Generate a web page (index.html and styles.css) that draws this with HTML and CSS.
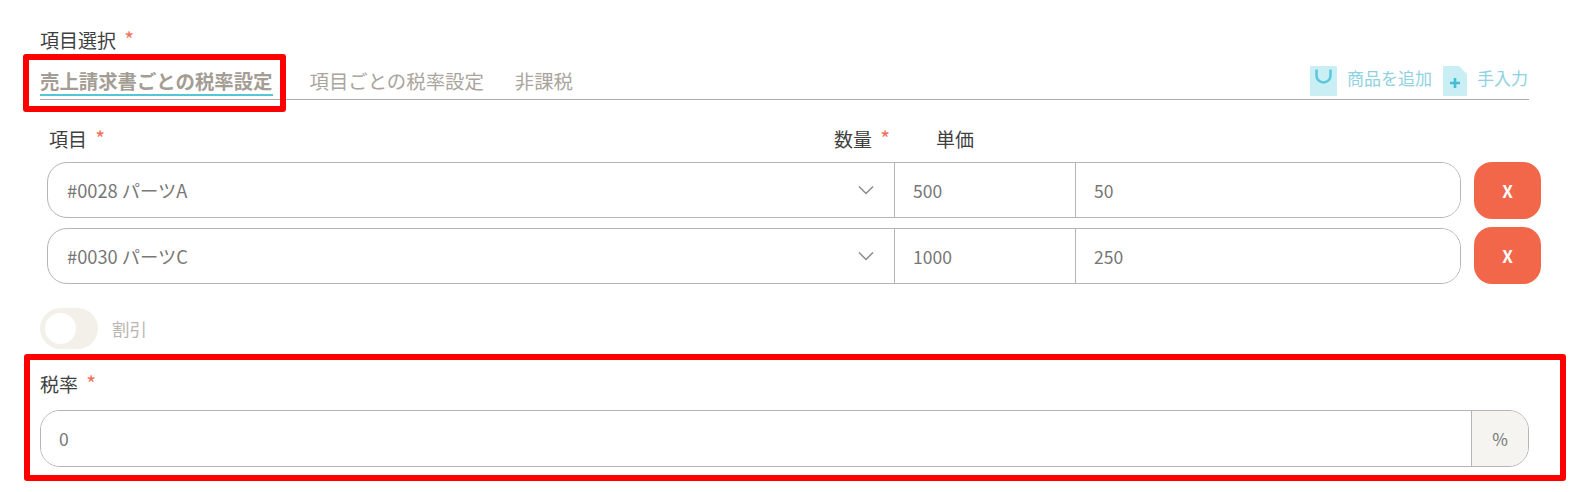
FILE: index.html
```html
<!DOCTYPE html>
<html>
<head>
    <title>項目選択</title>
    <link rel="stylesheet" href="styles.css">
</head>
<body>
    <div class="page">
        <div class="field-label">項目選択 <span class="req">*</span></div>
        <div class="tabs">
            <div class="tab tab-active">
                売上請求書ごとの税率設定
                <div class="mark mark-tab"></div>
            </div>
            <div class="tab">項目ごとの税率設定</div>
            <div class="tab">非課税</div>
            <div class="tools">
                <svg class="tool-icon" width="27" height="30" viewBox="0 0 27 30">
                    <rect width="27" height="30" rx="1" fill="#c9eef4"/>
                    <path d="M6.5 3.5v6a7 7 0 0 0 14 0v-6" fill="none" stroke="#5cc8dc" stroke-width="2.6"/>
                </svg>
                <span class="tool-text">商品を追加</span>
                <svg class="tool-icon tool-icon-doc" width="24" height="30" viewBox="0 0 24 30">
                    <path d="M1 0H16L24 8V29a1 1 0 0 1-1 1H1a1 1 0 0 1-1-1V1a1 1 0 0 1 1-1z" fill="#c9eef4"/>
                    <path d="M12 12v10M7 17h10" fill="none" stroke="#45bdd4" stroke-width="2.6"/>
                </svg>
                <span class="tool-text">手入力</span>
            </div>
        </div>

        <div class="items">
            <div class="items-head">
                <div class="head-name field-label">項目 <span class="req">*</span></div>
                <div class="head-qty field-label">数量 <span class="req">*</span></div>
                <div class="field-label">単価</div>
            </div>
            <div class="item-row">
                <div class="item-group">
                    <div class="item-select">
                        <span>#0028 パーツA</span>
                        <svg width="16" height="10" viewBox="0 0 16 10"><path d="M1 1.5l7 7 7-7" fill="none" stroke="#8f8b84" stroke-width="1.5"/></svg>
                    </div>
                    <input class="item-input item-qty" type="text" value="500">
                    <input class="item-input" type="text" value="50">
                </div>
                <button class="remove-btn">X</button>
            </div>
            <div class="item-row">
                <div class="item-group">
                    <div class="item-select">
                        <span>#0030 パーツC</span>
                        <svg width="16" height="10" viewBox="0 0 16 10"><path d="M1 1.5l7 7 7-7" fill="none" stroke="#8f8b84" stroke-width="1.5"/></svg>
                    </div>
                    <input class="item-input item-qty" type="text" value="1000">
                    <input class="item-input" type="text" value="250">
                </div>
                <button class="remove-btn">X</button>
            </div>
        </div>

        <div class="discount">
            <div class="toggle"><div class="knob"></div></div>
            <span class="discount-text">割引</span>
        </div>

        <div class="tax">
            <div class="mark mark-tax"></div>
            <div class="field-label tax-label">税率 <span class="req">*</span></div>
            <div class="tax-group">
                <input class="tax-input" type="text" value="0">
                <div class="tax-unit">%</div>
            </div>
        </div>
    </div>
</body>
</html>
```

FILE: styles.css
```css
body {
    font-family: "Noto Sans CJK JP", "Noto Sans", sans-serif;
    margin: 0;
    padding: 0;
    background-color: #ffffff;
    color: #444444;
}

.page {
    min-height: 100vh;
    box-sizing: border-box;
    padding: 27px 63px 0 40px;
}

.field-label {
    font-size: 19px;
    line-height: 26px;
    color: #3f3f3f;
}

.req {
    color: #f0705a;
    font-size: 21px;
    line-height: 20px;
    margin-left: 4px;
}

/* tabs */
.tabs {
    display: flex;
    align-items: flex-start;
    gap: 31px;
    padding-bottom: 3px;
    border-bottom: 1px solid #aaaaaa;
}

.tab {
    font-size: 19.4px;
    line-height: 26px;
    margin-top: 15px;
    padding-bottom: 2px;
    color: #aaa59d;
    position: relative;
}

.tab-active {
    font-weight: bold;
    color: #a39d94;
    border-bottom: 2px solid #55c6d8;
    padding-bottom: 0;
    margin-right: 6px;
}

.tools {
    display: flex;
    align-items: center;
    margin-left: auto;
    margin-right: 1px;
    margin-top: 13px;
    height: 30px;
}

.tool-icon {
    margin-right: 10px;
}

.tool-icon-doc {
    margin-left: 11px;
}

.tool-text {
    font-size: 17px;
    line-height: 26px;
    color: #8ed2e2;
    position: relative;
    top: -3px;
}

/* red annotation boxes */
.mark {
    position: absolute;
    border: 6px solid #ff0000;
    border-radius: 3px;
    box-sizing: border-box;
}

.mark-tab {
    top: -14px;
    left: -17px;
    width: 263px;
    height: 58px;
}

.mark-tax {
    top: -19px;
    left: -16px;
    right: -37px;
    bottom: -14px;
}

/* item rows */
.items {
    margin: 26px -12px 0 7px;
}

.items-head {
    display: flex;
    margin-bottom: 10px;
}

.head-name {
    width: 787px;
    padding-left: 2px;
    box-sizing: border-box;
}

.head-qty {
    width: 102px;
}

.item-row {
    display: flex;
    justify-content: space-between;
    height: 57px;
    margin-bottom: 8px;
}

.item-row:last-child {
    margin-bottom: 0;
}

.item-row:last-child .item-group {
    align-self: flex-end;
}

.item-group {
    display: flex;
    width: 1414px;
    height: 56px;
    box-sizing: border-box;
    border: 1px solid #b5b5b5;
    border-radius: 20px;
    overflow: hidden;
}

.item-select {
    display: flex;
    align-items: center;
    justify-content: space-between;
    width: 846px;
    padding: 0 20px 0 19px;
    box-sizing: border-box;
    font-size: 18.3px;
    color: #777777;
}

.item-input {
    border: none;
    border-left: 1px solid #b5b5b5;
    outline: none;
    font-family: inherit;
    font-size: 17.5px;
    color: #777777;
    padding: 0 18px;
    flex: 1;
    min-width: 0;
}

.item-qty {
    flex: none;
    width: 181px;
    box-sizing: border-box;
}

.remove-btn {
    width: 67px;
    border: none;
    border-radius: 18px;
    background: #f2674a;
    color: #ffffff;
    font-family: inherit;
    font-size: 17px;
    font-weight: bold;
}

/* discount */
.discount {
    display: flex;
    align-items: center;
    gap: 14px;
    margin-top: 24px;
}

.toggle {
    width: 58px;
    height: 41px;
    padding: 5px;
    box-sizing: border-box;
    border-radius: 21px;
    background: #f3f0ea;
}

.knob {
    width: 31px;
    height: 31px;
    border-radius: 50%;
    background: #ffffff;
}

.discount-text {
    font-size: 17.5px;
    color: #b9b6b0;
}

/* tax */
.tax {
    position: relative;
    margin-top: 24px;
}

.tax-label {
    line-height: 22px;
}

.tax-group {
    display: flex;
    height: 57px;
    margin-top: 15px;
    box-sizing: border-box;
    border: 1px solid #b5b5b5;
    border-radius: 20px;
    overflow: hidden;
}

.tax-input {
    flex: 1;
    border: none;
    outline: none;
    padding: 0 18px;
    font-family: inherit;
    font-size: 17.5px;
    color: #777777;
}

.tax-unit {
    display: flex;
    align-items: center;
    justify-content: center;
    width: 56px;
    border-left: 1px solid #b5b5b5;
    background: #f5f4f1;
    font-size: 17px;
    color: #777777;
}
```
